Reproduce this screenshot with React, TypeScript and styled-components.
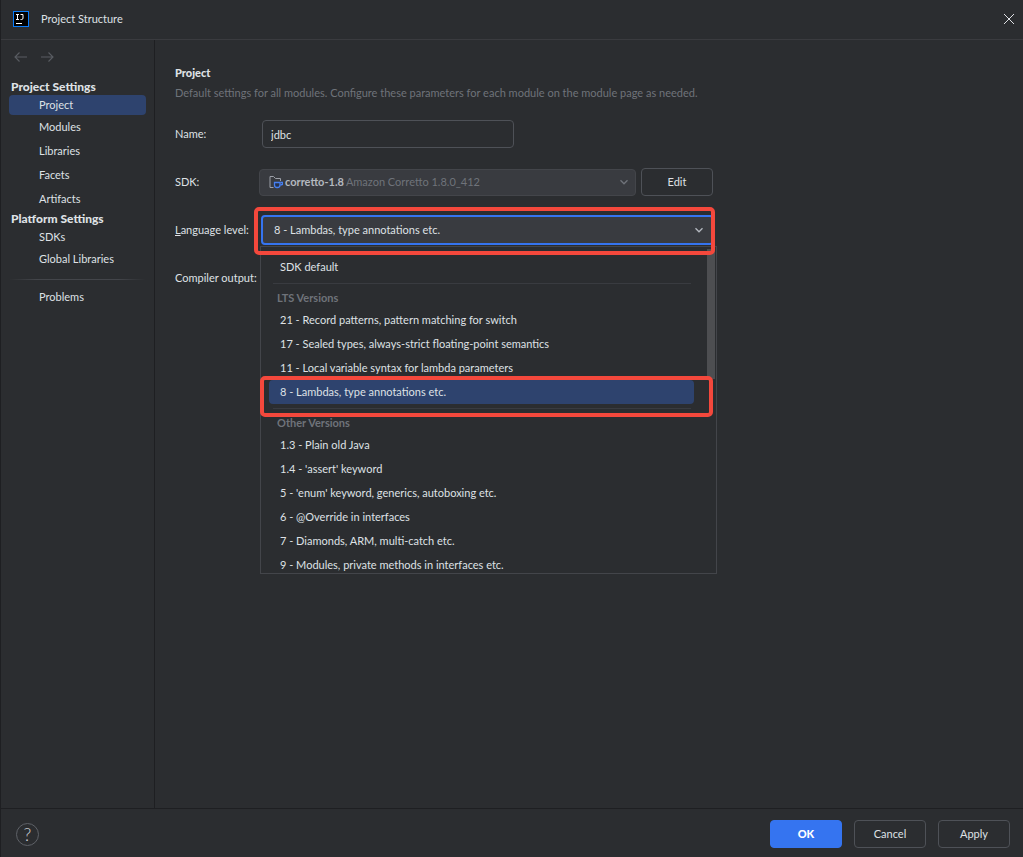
import React from "react";
import styled, { createGlobalStyle, css } from "styled-components";

const c = {
  bg: "#2b2d30",
  line: "#1e1f22",
  titleLine: "#3a3b3f",
  text: "#dfe1e5",
  muted: "#6f737a",
  border: "#4e5157",
  field: "#393b40",
  selected: "#2e436e",
  accent: "#3574f0",
  mark: "#f4483c",
};

const GlobalStyle = createGlobalStyle`
  *, *::before, *::after { box-sizing: border-box; }
  html, body, #root { height: 100%; }
  body {
    margin: 0;
    background: ${c.bg};
    color: ${c.text};
    font: 11px/16px Lato, "Open Sans", sans-serif;
  }
  button, input, select { font: inherit; color: inherit; margin: 0; }
`;

const Dialog = styled.div`
  display: flex;
  flex-direction: column;
  min-height: 100%;
  border-left: 1px solid ${c.line};
`;

const TitleBar = styled.header`
  display: flex;
  align-items: center;
  gap: 12px;
  height: 40px;
  padding: 0 8px 1px 12px;
  border-bottom: 1px solid ${c.titleLine};
`;

const Title = styled.h1`
  flex: 1;
  margin: 0;
  font-size: 11px;
  font-weight: 400;
`;

const IconButton = styled.button`
  display: flex;
  padding: 0;
  border: 0;
  background: none;
`;

const Body = styled.div`
  display: flex;
  flex: 1;
`;

const Sidebar = styled.nav`
  flex: none;
  width: 154px;
  padding: 9px 8px;
  border-right: 1px solid ${c.line};
`;

const History = styled.div`
  display: flex;
  gap: 10px;
  padding: 0 4px;
  margin-bottom: 14px;
  color: #5a5d63;
`;

const NavHeading = styled.h2`
  margin: 0;
  padding-left: 2px;
  font-size: 12px;
  line-height: 16px;
  font-weight: 900;
`;

const NavList = styled.ul`
  list-style: none;
  margin: 0;
  padding: 0;
`;

const NavLink = styled.a<{ $active?: boolean }>`
  display: block;
  padding-left: 30px;
  line-height: 24px;
  border-radius: 4px;
  color: inherit;
  text-decoration: none;
  background: ${(p) => (p.$active ? c.selected : "none")};
  ${NavHeading} + ${NavList} > li:first-child > & {
    line-height: 20px;
  }
`;

const NavDivider = styled.hr`
  height: 1px;
  margin: 8px 0 5px;
  border: 0;
  background: linear-gradient(90deg, transparent, #43454a 20%, #43454a 80%, transparent);
`;

const Main = styled.main`
  flex: 1;
  padding: 25px 20px;
`;

const SectionTitle = styled.h2`
  margin: 0 0 4px;
  font-size: 11px;
  line-height: 16px;
  font-weight: 900;
`;

const Description = styled.p`
  margin: 0 0 19px;
  color: ${c.muted};
`;

const Form = styled.form`
  display: flex;
  flex-direction: column;
  gap: 20px;
`;

const Row = styled.div`
  display: flex;
  align-items: center;
  height: 28px;
`;

const Label = styled.label`
  flex: none;
  width: 84px;
  white-space: nowrap;
`;

const TextInput = styled.input`
  width: 252px;
  height: 28px;
  margin-left: 3px;
  padding: 0 8px;
  border: 1px solid ${c.border};
  border-radius: 4px;
  background: ${c.bg};
  outline: none;
`;

const SdkBox = styled.div`
  display: flex;
  align-items: center;
  gap: 2px;
  width: 377px;
  height: 27px;
  margin-right: 5px;
  padding: 0 5px 0 9px;
  border: 1px solid #43454a;
  border-radius: 4px;
  background: ${c.field};
  color: ${c.muted};
`;

const SdkSelect = styled.select`
  appearance: none;
  field-sizing: content;
  padding: 0;
  border: 0;
  background: none;
  color: #b4b8bf;
  font-weight: 700;
  outline: none;
`;

const SdkHint = styled.span`
  flex: 1;
`;

const Button = styled.button<{ $primary?: boolean }>`
  width: 72px;
  height: 28px;
  padding: 0;
  border: 1px solid ${c.border};
  border-radius: 4px;
  background: none;
  ${(p) =>
    p.$primary &&
    css`
      border-color: ${c.accent};
      background: ${c.accent};
      color: #fff;
      font-weight: 900;
    `}
`;

const Combo = styled.div`
  position: relative;
  display: flex;
  align-items: center;
  width: 455px;
`;

const ComboSelect = styled.select`
  appearance: none;
  width: 100%;
  height: 30px;
  margin-left: 2px;
  padding: 0 11px;
  border: 2px solid ${c.accent};
  border-radius: 4px;
  background: ${c.field};
  outline: none;
`;

const ComboArrow = styled.span`
  position: absolute;
  right: 9px;
  display: flex;
  pointer-events: none;
  color: #b4b8bf;
`;

const Popup = styled.div`
  position: absolute;
  z-index: 1;
  top: 100%;
  left: 1px;
  width: 457px;
  height: 328px;
  margin-top: 1px;
  border: 1px solid #43454a;
  background: ${c.bg};
`;

const Options = styled.div`
  height: 100%;
  padding: 8px 22px 0 8px;
  overflow: hidden;
`;

const Option = styled.div<{ $active?: boolean }>`
  padding-left: 11px;
  line-height: 24px;
  border-radius: 4px;
  background: ${(p) => (p.$active ? c.selected : "none")};
`;

const GroupTitle = styled.div`
  margin: 4px 3px 0 4px;
  padding: 6px 0 2px 4px;
  border-top: 1px solid #393b40;
  line-height: 16px;
  font-weight: 700;
  color: ${c.muted};
`;

const Thumb = styled.div`
  position: absolute;
  top: 2px;
  right: 1px;
  width: 8px;
  height: 130px;
  background: #4d4e51;
`;

const Mark = styled.div<{ $list?: boolean }>`
  position: absolute;
  z-index: 2;
  border: 4px solid ${c.mark};
  border-radius: 5px;
  pointer-events: none;
  ${(p) =>
    p.$list
      ? css`
          top: 129px;
          left: -1px;
          right: 3px;
          height: 41px;
        `
      : css`
          inset: -8px -1px -10px -5px;
        `}
`;

const Footer = styled.footer`
  display: flex;
  align-items: center;
  gap: 12px;
  height: 49px;
  padding: 2px 13px 0 15px;
  border-top: 1px solid ${c.line};
`;

const HelpButton = styled.button`
  width: 23px;
  height: 23px;
  margin-right: auto;
  padding: 0;
  border: 1px solid #5e6167;
  border-radius: 50%;
  background: none;
  color: #ced0d6;
  font-size: 18px;
  font-weight: 300;
  line-height: 20px;
`;

const Chevron = () => (
  <svg width="12" height="12" viewBox="0 0 12 12" fill="none" stroke="currentColor" strokeWidth="1.3" aria-hidden="true">
    <path d="M2.5 4.2 6 7.8l3.5-3.6" />
  </svg>
);

const Arrow = ({ forward }: { forward?: boolean }) => (
  <svg width="16" height="16" viewBox="0 0 16 16" fill="none" stroke="currentColor" strokeWidth="1.1" aria-hidden="true">
    <path d={forward ? "M2 8h12M9.5 3.5 14 8l-4.500 4.500" : "M14 8H2M6.500 3.500 2 8l4.500 4.500"} />
  </svg>
);

const Logo = () => (
  <svg width="16" height="16" viewBox="0 0 16 16" fill="none" aria-hidden="true">
    <rect x=".5" y=".5" width="15" height="15" fill="#000" stroke="#087cfa" />
    <path d="M3 3.500h3M4.500 3.500v5M3 8.500h3M7.500 3.500h2.500v3.500q0 1.500-1.300 1.500H7.500" stroke="#fff" />
    <path d="M3 12.500h6" stroke="#fff" />
  </svg>
);

const SdkIcon = () => (
  <svg width="14" height="14" viewBox="0 0 14 14" fill="none" aria-hidden="true">
    <path d="M4.500 12.500h-3.500v-11h3.500l2 2h5v2.500" stroke="#9da0a8" />
    <path d="M5.500 7.500h5.500v2.500a2.500 2.500 0 0 1-2.500 2.500h-.5a2.500 2.500 0 0 1-2.500-2.500z" fill="#25324d" stroke="#467ff2" strokeWidth="1.300" />
    <path d="M11.500 7.500h2v2l-2 .5" stroke="#467ff2" strokeWidth="1.300" />
  </svg>
);

const ltsVersions = [
  "21 - Record patterns, pattern matching for switch",
  "17 - Sealed types, always-strict floating-point semantics",
  "11 - Local variable syntax for lambda parameters",
  "8 - Lambdas, type annotations etc.",
];

const otherVersions = [
  "1.3 - Plain old Java",
  "1.4 - 'assert' keyword",
  "5 - 'enum' keyword, generics, autoboxing etc.",
  "6 - @Override in interfaces",
  "7 - Diamonds, ARM, multi-catch etc.",
  "9 - Modules, private methods in interfaces etc.",
];

const current = "8 - Lambdas, type annotations etc.";

const NavItems = ({ items, active }: { items: string[]; active?: string }) => (
  <NavList>
    {items.map((item) => (
      <li key={item}>
        <NavLink href="#" $active={item === active}>
          {item}
        </NavLink>
      </li>
    ))}
  </NavList>
);

const VersionGroup = ({ title, versions }: { title: string; versions: string[] }) => (
  <div role="group" aria-label={title}>
    <GroupTitle>{title}</GroupTitle>
    {versions.map((v) => (
      <Option key={v} role="option" aria-selected={v === current} $active={v === current}>
        {v}
      </Option>
    ))}
  </div>
);

export default function App() {
  return (
    <>
      <GlobalStyle />
      <Dialog>
        <TitleBar>
          <Logo />
          <Title>Project Structure</Title>
          <IconButton aria-label="Close">
            <svg width="12" height="12" viewBox="0 0 12 12" stroke="#dfe1e5" aria-hidden="true">
              <path d="M1 1l10 10M11 1 1 11" />
            </svg>
          </IconButton>
        </TitleBar>
        <Body>
          <Sidebar>
            <History>
              <IconButton aria-label="Back">
                <Arrow />
              </IconButton>
              <IconButton aria-label="Forward">
                <Arrow forward />
              </IconButton>
            </History>
            <NavHeading>Project Settings</NavHeading>
            <NavItems items={["Project", "Modules", "Libraries", "Facets", "Artifacts"]} active="Project" />
            <NavHeading>Platform Settings</NavHeading>
            <NavItems items={["SDKs", "Global Libraries"]} />
            <NavDivider />
            <NavItems items={["Problems"]} />
          </Sidebar>
          <Main>
            <SectionTitle>Project</SectionTitle>
            <Description>
              Default settings for all modules. Configure these parameters for each module on the module page as needed.
            </Description>
            <Form onSubmit={(e) => e.preventDefault()}>
              <Row>
                <Label htmlFor="name">Name:</Label>
                <TextInput id="name" defaultValue="jdbc" />
              </Row>
              <Row>
                <Label htmlFor="sdk">SDK:</Label>
                <SdkBox>
                  <SdkIcon />
                  <SdkSelect id="sdk">
                    <option>corretto-1.8</option>
                  </SdkSelect>
                  <SdkHint>Amazon Corretto 1.8.0_412</SdkHint>
                  <Chevron />
                </SdkBox>
                <Button type="button">Edit</Button>
              </Row>
              <Row>
                <Label htmlFor="level">
                  <u>L</u>anguage level:
                </Label>
                <Combo>
                  <ComboSelect id="level" defaultValue={current}>
                    <option>{current}</option>
                  </ComboSelect>
                  <ComboArrow>
                    <Chevron />
                  </ComboArrow>
                  <Mark />
                  <Popup>
                    <Options role="listbox" aria-label="Language level">
                      <Option role="option" aria-selected={false}>
                        SDK default
                      </Option>
                      <VersionGroup title="LTS Versions" versions={ltsVersions} />
                      <VersionGroup title="Other Versions" versions={otherVersions} />
                    </Options>
                    <Thumb />
                    <Mark $list />
                  </Popup>
                </Combo>
              </Row>
              <Row>
                <Label as="span">Compiler output:</Label>
              </Row>
            </Form>
          </Main>
        </Body>
        <Footer>
          <HelpButton aria-label="Help">?</HelpButton>
          <Button $primary>OK</Button>
          <Button>Cancel</Button>
          <Button>Apply</Button>
        </Footer>
      </Dialog>
    </>
  );
}
